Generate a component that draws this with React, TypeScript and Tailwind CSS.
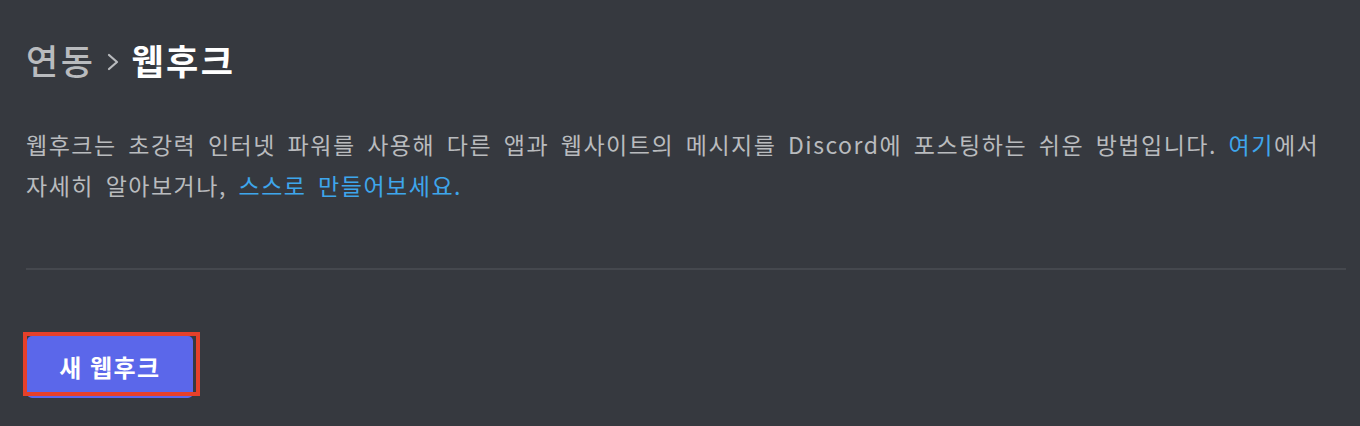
import React from "react";

const font = { fontFamily: '"Noto Sans CJK KR", "Noto Sans", sans-serif' };

const App = () => {
  return (
    <div
      className="w-full min-h-[426px] bg-[#36393f] pl-[26px] pr-[14px] pt-[38px] pb-[26px]"
      style={font}
    >
      {/* Breadcrumb */}
      <h1 className="flex items-center h-[44px] text-[35px] leading-[44px] tracking-[2.5px]">
        <span className="text-[#b9bbbe] font-medium">연동</span>
        <svg width="16" height="22" viewBox="0 0 16 22" className="mt-[4px] ml-[10px] mr-[10px]">
          <polyline
            points="4,4 12,11 4,18"
            fill="none"
            stroke="#b9bbbe"
            strokeWidth="2.2"
            strokeLinecap="round"
            strokeLinejoin="round"
          />
        </svg>
        <span className="text-white font-bold">웹후크</span>
      </h1>

      <p className="mt-[42px] text-[23px] leading-[41px] text-[#b9bbbe] tracking-[1.5px] [word-spacing:5px] pr-[14px]">
        웹후크는 초강력 인터넷 파워를 사용해 다른 앱과 웹사이트의 메시지를 Discord에 포스팅하는 쉬운 방법입니다.{" "}
        <a className="text-[#3ea6ec]">여기</a>에서 자세히 알아보거나,{" "}
        <a className="text-[#3ea6ec]">스스로 만들어보세요.</a>
      </p>

      <div className="mt-[62px] h-[2px] bg-[#45484e]" />

      <div className="mt-[66px] pl-px">
        <div className="relative inline-block">
          <button className="w-[166px] h-[62px] rounded-[5px] bg-[#5b67ea] text-white text-[24px] font-bold tracking-[1.5px]">
            새 웹후크
          </button>
          {/* annotation frame */}
          <div className="absolute -left-[4px] -top-[4px] w-[177px] h-[64px] border-[4px] border-[#e6402a] pointer-events-none" />
        </div>
      </div>
    </div>
  );
};

export default App;
